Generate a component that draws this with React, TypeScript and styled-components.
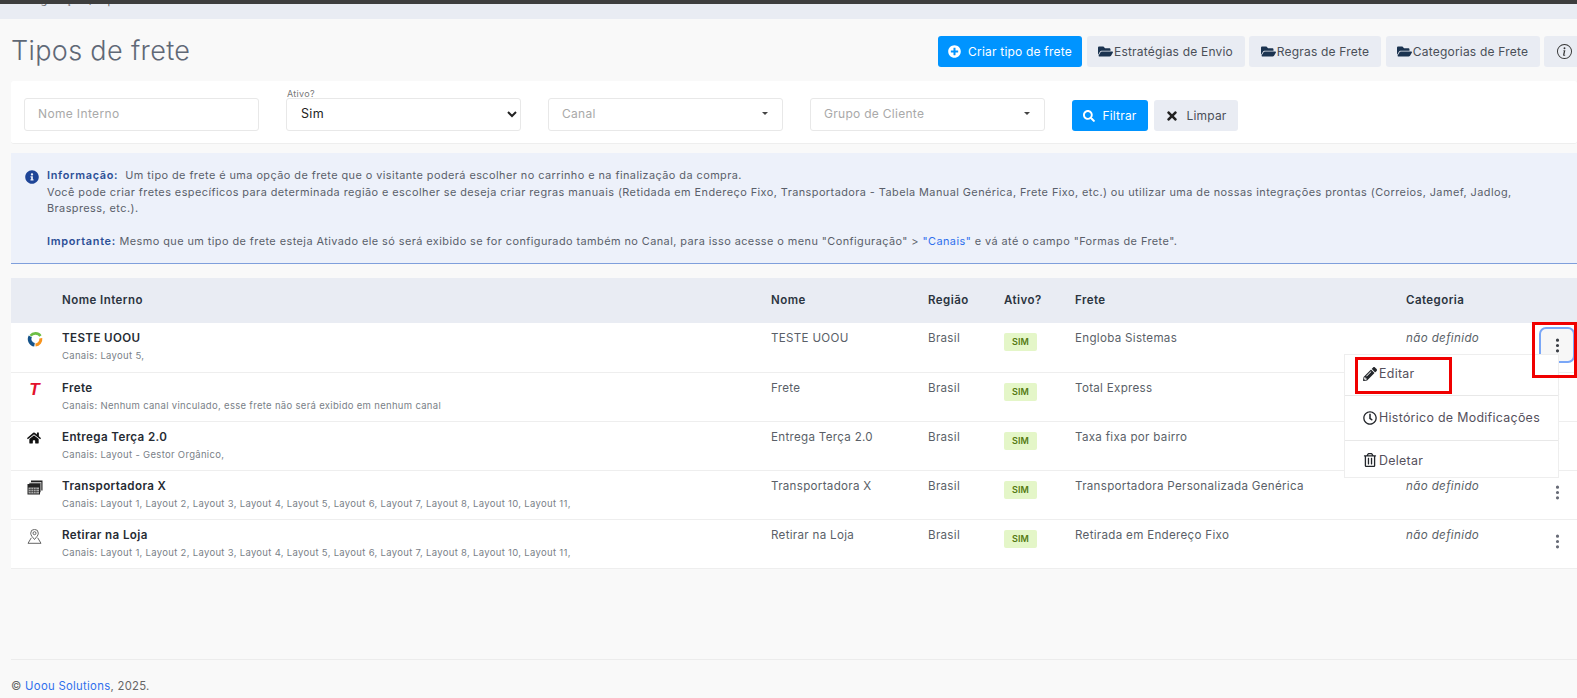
import React from "react";
import styled, { createGlobalStyle } from "styled-components";
import { FaPlusCircle, FaFolderOpen, FaSearch, FaTimes, FaInfoCircle, FaHome, FaPencilAlt, FaRegClock, FaRegTrashAlt } from "react-icons/fa";
import { BsThreeDotsVertical, BsInfoCircle } from "react-icons/bs";

const Global = createGlobalStyle`
  html, body { margin: 0; padding: 0; background: #f9f9f9; }
  body { font-family: Inter, "Open Sans", sans-serif; overflow: hidden; }
  * { box-sizing: border-box; }
`;

const Page = styled.div`
  position: relative;
  width: 1577px;
  height: 698px;
  overflow: hidden;
`;
const TopBar = styled.div`
  height: 4px;
  background: #3d3d3d;
`;
const Crumbs = styled.div`
  height: 15px;
  background: #e9ecf3;
  overflow: hidden;
  padding-left: 11px;
  font-size: 11px;
  letter-spacing: 0.35px;
  line-height: 14px;
  color: #666;
  & > span { display: block; margin-top: -11px; }
`;
const Header = styled.header`
  display: flex;
  justify-content: space-between;
  align-items: center;
  height: 31px;
  margin: 17px 0 14px;
  padding-left: 11px;
`;
const Title = styled.h1`
  margin: 0;
  padding-bottom: 2px;
  font-size: 27px;
  font-weight: 300;
  letter-spacing: 0.35px;
  color: #5f6876;
`;
const Actions = styled.div`
  display: flex;
  gap: 4.5px;
  margin-right: -7px;
`;
const Btn = styled.button<{ $w: number; $primary?: boolean; $gap?: number }>`
  width: ${(p) => p.$w}px;
  height: 31px;
  border: 0;
  border-radius: 3px;
  padding: 0;
  display: flex;
  align-items: center;
  justify-content: center;
  gap: ${(p) => p.$gap ?? (p.$primary ? 7 : 1)}px;
  font: 400 12px Inter, sans-serif;
  letter-spacing: 0.2px;
  background: ${(p) => (p.$primary ? "#0094ff" : "#e9ecf3")};
  color: ${(p) => (p.$primary ? "#fff" : "#4a4f58")};
  flex: none;
  svg { flex: none; }
`;
const FolderIcon = styled(FaFolderOpen)`
  color: #1b3350;
  font-size: 15px;
`;
const FilterCard = styled.section`
  display: flex;
  align-items: flex-start;
  gap: 27px;
  height: 63px;
  margin-left: 11px;
  padding: 17px 13px;
  background: #fff;
  border-bottom: 1px solid #eeeeee;
  border-radius: 3px;
`;
const Field = styled.div`
  position: relative;
  width: 235px;
  height: 33px;
  flex: none;
`;
const TextInput = styled.input`
  width: 100%;
  height: 100%;
  border: 1px solid #e8e8e8;
  border-radius: 3px;
  padding: 0 13px 2px;
  font: 400 12px Inter, sans-serif;
  letter-spacing: 0.35px;
  outline: none;
  &::placeholder { color: #a9a9a9; }
`;
const FloatLabel = styled.label`
  position: absolute;
  left: 1px;
  top: -9px;
  font-size: 9px;
  line-height: 9px;
  letter-spacing: 0.3px;
  color: #777;
`;
const NativeSelect = styled.select`
  width: 100%;
  height: 100%;
  border: 1px solid #e8e8e8;
  border-radius: 3px;
  background: #fff;
  padding: 0 0 2px 10px;
  font: 400 12.5px Inter, sans-serif;
  letter-spacing: 0.3px;
  color: #222;
  outline: none;
`;
const FakeSelect = styled.div`
  display: flex;
  align-items: center;
  justify-content: space-between;
  width: 100%;
  height: 100%;
  border: 1px solid #e8e8e8;
  border-radius: 3px;
  background: #fff;
  padding: 0 14px 2px 13px;
  font-size: 12px;
  letter-spacing: 0.28px;
  color: #a9a9a9;
`;
const Caret = styled.i`
  width: 0;
  height: 0;
  border-left: 3px solid transparent;
  border-right: 3px solid transparent;
  border-top: 3px solid #444;
`;
const FilterButtons = styled.div`
  display: flex;
  gap: 6px;
  margin-top: 2px;
`;
const Alert = styled.section`
  display: flex;
  gap: 8px;
  height: 111px;
  margin: 9px 0 14px 11px;
  padding: 14px 0 0 14px;
  background: #edf1fa;
  border-bottom: 1px solid #7f9fdc;
  font-size: 10.9px;
  line-height: 16.5px;
  letter-spacing: 0.44px;
  color: #5a5f6a;
  white-space: nowrap;
  & > svg { flex: none; margin-top: 3px; color: #1f4597; font-size: 14px; }
  strong { font-weight: 600; color: #2b4f96; letter-spacing: 0.7px; }
  a { color: #2f6fed; text-decoration: none; }
`;
const TableEl = styled.table`
  width: 1566px;
  margin-left: 11px;
  border-collapse: collapse;
  table-layout: fixed;
`;
const Th = styled.th`
  height: 45px;
  padding: 0 0 2px;
  background: #e9ecf3;
  text-align: left;
  font-size: 11.5px;
  font-weight: 600;
  letter-spacing: 0.45px;
  color: #2b3440;
`;
const Tr = styled.tr`
  height: 49px;
  background: #fff;
  border-bottom: 1px solid #eeeeee;
`;
const Td = styled.td`
  padding: 7px 0 0;
  vertical-align: top;
  height: 49px;
  font-size: 11.6px;
  line-height: 16px;
  letter-spacing: 0.3px;
  color: #5a5f68;
  overflow: hidden;
  white-space: nowrap;
`;
const IconCell = styled(Td)`
  padding: 9px 0 0 16px;
  line-height: 0;
`;
const ItalicCell = styled(Td)`
  font-style: italic;
  letter-spacing: 0.36px;
`;
const RowName = styled.div`
  font-weight: 600;
  color: #262b33;
  letter-spacing: 0.38px;
`;
const RowSub = styled.div`
  margin-top: 3px;
  font-size: 9.5px;
  line-height: 13px;
  letter-spacing: 0.31px;
  color: #7a7f88;
`;
const Badge = styled.span`
  display: flex;
  align-items: center;
  justify-content: center;
  width: 33px;
  height: 18px;
  margin-top: 3px;
  border-radius: 2px;
  background: #e4f6c8;
  color: #557a12;
  font-size: 9px;
  font-weight: 600;
  letter-spacing: 0.2px;
`;
const TLogo = styled.span`
  display: block;
  width: 15px;
  text-align: center;
  font: italic 900 17px/15px "Liberation Sans", sans-serif;
  color: #e3122c;
`;
const KebabCell = styled(Td)`
  padding: 4px 0 0 7px;
`;
const Kebab = styled.button<{ $active?: boolean }>`
  display: flex;
  align-items: center;
  justify-content: center;
  width: 36px;
  height: 36px;
  padding: 0;
  border-radius: 7px;
  border: 2px solid ${(p) => (p.$active ? "#7aa7f7" : "transparent")};
  background: ${(p) => (p.$active ? "#f7f7f7" : "transparent")};
  color: ${(p) => (p.$active ? "#3b3f46" : "#676b76")};
  font-size: 17px;
`;
const Menu = styled.div`
  position: absolute;
  left: 1344px;
  top: 354px;
  width: 215px;
  height: 124px;
  background: #fff;
  border: 1px solid #eeeeee;
  display: flex;
  flex-direction: column;
`;
const MenuItem = styled.div<{ $h: number; $shift?: number }>`
  display: flex;
  align-items: center;
  gap: 2px;
  height: ${(p) => p.$h}px;
  padding-left: 18px;
  padding-top: ${(p) => Math.max(p.$shift ?? 0, 0)}px;
  padding-bottom: ${(p) => Math.max(-(p.$shift ?? 0), 0)}px;
  font-size: 12.4px;
  letter-spacing: 0.3px;
  color: #55505c;
  border-bottom: 1px solid #e8e8e8;
  &:last-child { border-bottom: 0; }
  svg { color: #23262b; font-size: 14px; flex: none; }
`;
const RedBox = styled.div<{ $x: number; $y: number; $w: number; $h: number }>`
  position: absolute;
  left: ${(p) => p.$x}px;
  top: ${(p) => p.$y}px;
  width: ${(p) => p.$w}px;
  height: ${(p) => p.$h}px;
  border: 3px solid #f00000;
  pointer-events: none;
`;
const Footer = styled.footer`
  margin: 90px 0 0 11px;
  padding-top: 18px;
  border-top: 1px solid #ececec;
  font-size: 11.3px;
  line-height: 16px;
  letter-spacing: 0.3px;
  color: #666;
  a { color: #2f6fed; text-decoration: none; }
`;

const UoouLogo = () => (
  <svg width="16" height="15" viewBox="0 0 16 15" fill="none">
    <path d="M3.500 3.800A6.200 6.200 0 0 1 13.500 4" stroke="#6cbe45" strokeWidth="2.600" />
    <path d="M13.800 6.200A6 6 0 0 1 8.500 13" stroke="#f7941e" strokeWidth="3" />
    <path d="M7.500 12.800A5.800 5.800 0 0 1 3.300 4.300" stroke="#15538a" strokeWidth="3.600" />
  </svg>
);
const StackIcon = () => (
  <svg width="16" height="15" viewBox="0 0 16 15">
    <rect x="4" y="0.500" width="11.500" height="10" fill="#222" />
    <rect x="2" y="2.500" width="12" height="10" fill="#555" stroke="#fff" strokeWidth="0.600" />
    <rect x="0.500" y="4" width="12.500" height="10.500" fill="#222" />
    <path d="M1.500 7.500h10.500v6H1.500z" fill="#aaa" />
    <path d="M1.500 9.500h10.500M1.500 11.500h10.500M4 7.500v6M6.500 7.500v6M9 7.500v6" stroke="#333" strokeWidth="0.600" />
  </svg>
);
const PinIcon = () => (
  <svg width="15" height="15" viewBox="0 0 15 15" fill="none" stroke="#555" strokeWidth="0.900">
    <path d="M7.500 10.500C5.800 8.300 3.700 6.500 3.700 4.200a3.800 3.800 0 0 1 7.600 0c0 2.300-2.100 4.100-3.800 6.300z" />
    <circle cx="7.500" cy="4.200" r="1.500" />
    <path d="M4.300 8.800L1 14.300h13L10.700 8.800" />
  </svg>
);

const layouts = "Canais: Layout 1, Layout 2, Layout 3, Layout 4, Layout 5, Layout 6, Layout 7, Layout 8, Layout 10, Layout 11,";

type Row = { icon: React.ReactNode; name: string; sub: string; frete: string };
const rows: Row[] = [
  { icon: <UoouLogo />, name: "TESTE UOOU", sub: "Canais: Layout 5,", frete: "Engloba Sistemas" },
  { icon: <TLogo>T</TLogo>, name: "Frete", sub: "Canais: Nenhum canal vinculado, esse frete não será exibido em nenhum canal", frete: "Total Express" },
  { icon: <FaHome size={14} color="#111" />, name: "Entrega Terça 2.0", sub: "Canais: Layout - Gestor Orgânico,", frete: "Taxa fixa por bairro" },
  { icon: <StackIcon />, name: "Transportadora X", sub: layouts, frete: "Transportadora Personalizada Genérica" },
  { icon: <PinIcon />, name: "Retirar na Loja", sub: layouts, frete: "Retirada em Endereço Fixo" },
];

export default function App() {
  return (
    <Page>
      <Global />
      <TopBar />
      <Crumbs><span>Configuração / Tipos de frete</span></Crumbs>
      <Header>
        <Title>Tipos de frete</Title>
        <Actions>
          <Btn $primary $w={144}><FaPlusCircle size={13} />Criar tipo de frete</Btn>
          <Btn $w={158}><FolderIcon />Estratégias de Envio</Btn>
          <Btn $w={132}><FolderIcon />Regras de Frete</Btn>
          <Btn $w={154}><FolderIcon />Categorias de Frete</Btn>
          <Btn $w={40}><BsInfoCircle size={15} color="#333" /></Btn>
        </Actions>
      </Header>
      <FilterCard>
        <Field><TextInput placeholder="Nome Interno" /></Field>
        <Field>
          <FloatLabel>Ativo?</FloatLabel>
          <NativeSelect defaultValue="Sim"><option>Sim</option><option>Não</option></NativeSelect>
        </Field>
        <Field><FakeSelect>Canal<Caret /></FakeSelect></Field>
        <Field><FakeSelect>Grupo de Cliente<Caret /></FakeSelect></Field>
        <FilterButtons>
          <Btn $primary $w={76}><FaSearch size={12} />Filtrar</Btn>
          <Btn $w={84} $gap={7}><FaTimes size={14} color="#222" />Limpar</Btn>
        </FilterButtons>
      </FilterCard>
      <Alert>
        <FaInfoCircle />
        <div>
          <strong>Informação:</strong>&nbsp; Um tipo de frete é uma opção de frete que o visitante poderá escolher no carrinho e na finalização da compra.<br />
          Você pode criar fretes específicos para determinada região e escolher se deseja criar regras manuais (Retidada em Endereço Fixo, Transportadora - Tabela Manual Genérica, Frete Fixo, etc.) ou utilizar uma de nossas integrações prontas (Correios, Jamef, Jadlog,<br />
          Braspress, etc.).<br />
          <br />
          <strong>Importante:</strong> Mesmo que um tipo de frete esteja Ativado ele só será exibido se for configurado também no Canal, para isso acesse o menu "Configuração" &gt; <a href="#">"Canais"</a> e vá até o campo "Formas de Frete".
        </div>
      </Alert>
      <TableEl>
        <colgroup>
          <col width={51} /><col width={709} /><col width={157} /><col width={76} /><col width={71} /><col width={331} /><col width={126} /><col width={45} />
        </colgroup>
        <thead>
          <tr>
            <Th /><Th>Nome Interno</Th><Th>Nome</Th><Th>Região</Th><Th>Ativo?</Th><Th>Frete</Th><Th>Categoria</Th><Th />
          </tr>
        </thead>
        <tbody>
          {rows.map((r, i) => (
            <Tr key={r.name}>
              <IconCell>{r.icon}</IconCell>
              <Td><RowName>{r.name}</RowName><RowSub>{r.sub}</RowSub></Td>
              <Td>{r.name}</Td>
              <Td>Brasil</Td>
              <Td><Badge>SIM</Badge></Td>
              <Td>{r.frete}</Td>
              <ItalicCell>não definido</ItalicCell>
              <KebabCell><Kebab $active={i === 0}><BsThreeDotsVertical /></Kebab></KebabCell>
            </Tr>
          ))}
        </tbody>
      </TableEl>
      <Footer>© <a href="#">Uoou Solutions</a>, 2025.</Footer>
      <Menu>
        <MenuItem $h={42} $shift={-3}><FaPencilAlt />Editar</MenuItem>
        <MenuItem $h={45}><FaRegClock />Histórico de Modificações</MenuItem>
        <MenuItem $h={37} $shift={3}><FaRegTrashAlt />Deletar</MenuItem>
      </Menu>
      <RedBox $x={1355} $y={357} $w={97} $h={37} />
      <RedBox $x={1532} $y={322} $w={45} $h={56} />
    </Page>
  );
}
